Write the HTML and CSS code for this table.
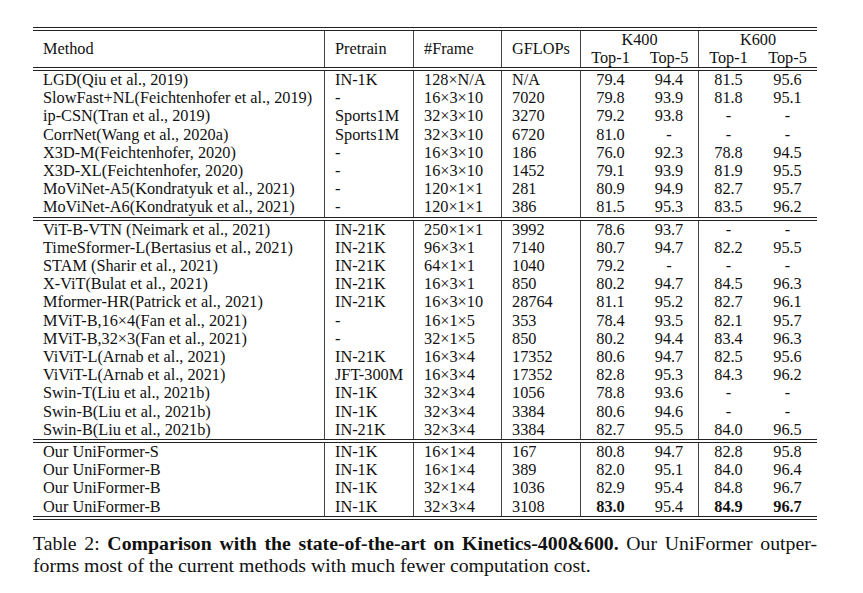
FILE: index.html
```html
<!DOCTYPE html>
<html>
<head>
<meta charset="utf-8">
<link rel="stylesheet" href="styles.css">
</head>
<body>
<div class="page">
<table class="results">
<colgroup>
<col class="c-method"><col class="c-pre"><col class="c-frame"><col class="c-gf">
<col class="c-acc"><col class="c-acc"><col class="c-acc"><col class="c-acc">
</colgroup>
<tbody>
<tr class="rule"><td colspan="8"></td></tr>
<tr class="head">
<td rowspan="2" class="l vr">Method</td>
<td rowspan="2" class="l vr">Pretrain</td>
<td rowspan="2" class="l vr">#Frame</td>
<td rowspan="2" class="l vr">GFLOPs</td>
<td colspan="2" class="c vr">K400</td>
<td colspan="2" class="c">K600</td>
</tr>
<tr class="head">
<td class="c">Top-1</td><td class="c vr">Top-5</td><td class="c">Top-1</td><td class="c">Top-5</td>
</tr>
<tr class="rule"><td colspan="8"></td></tr>
<tr><td class="l vr">LGD(Qiu et al., 2019)</td><td class="l vr">IN-1K</td><td class="l vr">128×N/A</td><td class="l vr">N/A</td><td class="c">79.4</td><td class="c vr">94.4</td><td class="c">81.5</td><td class="c">95.6</td></tr>
<tr><td class="l vr">SlowFast+NL(Feichtenhofer et al., 2019)</td><td class="l vr">-</td><td class="l vr">16×3×10</td><td class="l vr">7020</td><td class="c">79.8</td><td class="c vr">93.9</td><td class="c">81.8</td><td class="c">95.1</td></tr>
<tr><td class="l vr">ip-CSN(Tran et al., 2019)</td><td class="l vr">Sports1M</td><td class="l vr">32×3×10</td><td class="l vr">3270</td><td class="c">79.2</td><td class="c vr">93.8</td><td class="c">-</td><td class="c">-</td></tr>
<tr><td class="l vr">CorrNet(Wang et al., 2020a)</td><td class="l vr">Sports1M</td><td class="l vr">32×3×10</td><td class="l vr">6720</td><td class="c">81.0</td><td class="c vr">-</td><td class="c">-</td><td class="c">-</td></tr>
<tr><td class="l vr">X3D-M(Feichtenhofer, 2020)</td><td class="l vr">-</td><td class="l vr">16×3×10</td><td class="l vr">186</td><td class="c">76.0</td><td class="c vr">92.3</td><td class="c">78.8</td><td class="c">94.5</td></tr>
<tr><td class="l vr">X3D-XL(Feichtenhofer, 2020)</td><td class="l vr">-</td><td class="l vr">16×3×10</td><td class="l vr">1452</td><td class="c">79.1</td><td class="c vr">93.9</td><td class="c">81.9</td><td class="c">95.5</td></tr>
<tr><td class="l vr">MoViNet-A5(Kondratyuk et al., 2021)</td><td class="l vr">-</td><td class="l vr">120×1×1</td><td class="l vr">281</td><td class="c">80.9</td><td class="c vr">94.9</td><td class="c">82.7</td><td class="c">95.7</td></tr>
<tr><td class="l vr">MoViNet-A6(Kondratyuk et al., 2021)</td><td class="l vr">-</td><td class="l vr">120×1×1</td><td class="l vr">386</td><td class="c">81.5</td><td class="c vr">95.3</td><td class="c">83.5</td><td class="c">96.2</td></tr>
<tr class="rule"><td colspan="8"></td></tr>
<tr><td class="l vr">ViT-B-VTN (Neimark et al., 2021)</td><td class="l vr">IN-21K</td><td class="l vr">250×1×1</td><td class="l vr">3992</td><td class="c">78.6</td><td class="c vr">93.7</td><td class="c">-</td><td class="c">-</td></tr>
<tr><td class="l vr">TimeSformer-L(Bertasius et al., 2021)</td><td class="l vr">IN-21K</td><td class="l vr">96×3×1</td><td class="l vr">7140</td><td class="c">80.7</td><td class="c vr">94.7</td><td class="c">82.2</td><td class="c">95.5</td></tr>
<tr><td class="l vr">STAM (Sharir et al., 2021)</td><td class="l vr">IN-21K</td><td class="l vr">64×1×1</td><td class="l vr">1040</td><td class="c">79.2</td><td class="c vr">-</td><td class="c">-</td><td class="c">-</td></tr>
<tr><td class="l vr">X-ViT(Bulat et al., 2021)</td><td class="l vr">IN-21K</td><td class="l vr">16×3×1</td><td class="l vr">850</td><td class="c">80.2</td><td class="c vr">94.7</td><td class="c">84.5</td><td class="c">96.3</td></tr>
<tr><td class="l vr">Mformer-HR(Patrick et al., 2021)</td><td class="l vr">IN-21K</td><td class="l vr">16×3×10</td><td class="l vr">28764</td><td class="c">81.1</td><td class="c vr">95.2</td><td class="c">82.7</td><td class="c">96.1</td></tr>
<tr><td class="l vr">MViT-B,16×4(Fan et al., 2021)</td><td class="l vr">-</td><td class="l vr">16×1×5</td><td class="l vr">353</td><td class="c">78.4</td><td class="c vr">93.5</td><td class="c">82.1</td><td class="c">95.7</td></tr>
<tr><td class="l vr">MViT-B,32×3(Fan et al., 2021)</td><td class="l vr">-</td><td class="l vr">32×1×5</td><td class="l vr">850</td><td class="c">80.2</td><td class="c vr">94.4</td><td class="c">83.4</td><td class="c">96.3</td></tr>
<tr><td class="l vr">ViViT-L(Arnab et al., 2021)</td><td class="l vr">IN-21K</td><td class="l vr">16×3×4</td><td class="l vr">17352</td><td class="c">80.6</td><td class="c vr">94.7</td><td class="c">82.5</td><td class="c">95.6</td></tr>
<tr><td class="l vr">ViViT-L(Arnab et al., 2021)</td><td class="l vr">JFT-300M</td><td class="l vr">16×3×4</td><td class="l vr">17352</td><td class="c">82.8</td><td class="c vr">95.3</td><td class="c">84.3</td><td class="c">96.2</td></tr>
<tr><td class="l vr">Swin-T(Liu et al., 2021b)</td><td class="l vr">IN-1K</td><td class="l vr">32×3×4</td><td class="l vr">1056</td><td class="c">78.8</td><td class="c vr">93.6</td><td class="c">-</td><td class="c">-</td></tr>
<tr><td class="l vr">Swin-B(Liu et al., 2021b)</td><td class="l vr">IN-1K</td><td class="l vr">32×3×4</td><td class="l vr">3384</td><td class="c">80.6</td><td class="c vr">94.6</td><td class="c">-</td><td class="c">-</td></tr>
<tr><td class="l vr">Swin-B(Liu et al., 2021b)</td><td class="l vr">IN-21K</td><td class="l vr">32×3×4</td><td class="l vr">3384</td><td class="c">82.7</td><td class="c vr">95.5</td><td class="c">84.0</td><td class="c">96.5</td></tr>
<tr class="rule"><td colspan="8"></td></tr>
<tr><td class="l vr">Our UniFormer-S</td><td class="l vr">IN-1K</td><td class="l vr">16×1×4</td><td class="l vr">167</td><td class="c">80.8</td><td class="c vr">94.7</td><td class="c">82.8</td><td class="c">95.8</td></tr>
<tr><td class="l vr">Our UniFormer-B</td><td class="l vr">IN-1K</td><td class="l vr">16×1×4</td><td class="l vr">389</td><td class="c">82.0</td><td class="c vr">95.1</td><td class="c">84.0</td><td class="c">96.4</td></tr>
<tr><td class="l vr">Our UniFormer-B</td><td class="l vr">IN-1K</td><td class="l vr">32×1×4</td><td class="l vr">1036</td><td class="c">82.9</td><td class="c vr">95.4</td><td class="c">84.8</td><td class="c">96.7</td></tr>
<tr><td class="l vr">Our UniFormer-B</td><td class="l vr">IN-1K</td><td class="l vr">32×3×4</td><td class="l vr">3108</td><td class="c b">83.0</td><td class="c vr">95.4</td><td class="c b">84.9</td><td class="c b">96.7</td></tr>
<tr class="rule"><td colspan="8"></td></tr>
</tbody>
</table>
<div class="caption">
<div class="cap-line justify">Table 2: <b>Comparison with the state-of-the-art on Kinetics-400&amp;600.</b> Our UniFormer outper-</div>
<div class="cap-line">forms most of the current methods with much fewer computation cost.</div>
</div>
</div>
</body>
</html>
```

FILE: styles.css
```css
html, body {
  margin: 0;
  padding: 0;
  background: #ffffff;
}

.page {
  padding: 27px 0 0 33px;
  width: 784px;
  font-family: "Liberation Serif", "Times New Roman", serif;
  color: #111;
}

.results {
  border-collapse: separate;
  border-spacing: 0;
  table-layout: fixed;
  width: 784px;
  font-size: 16.3px;
}

.c-method { width: 292px; }
.c-pre { width: 89px; }
.c-frame { width: 88px; }
.c-gf { width: 79px; }
.c-acc { width: 59px; }

.results td {
  box-sizing: border-box;
  padding: 0;
  height: 18.2px;
  line-height: 18.2px;
  white-space: nowrap;
  vertical-align: middle;
}

.results td.l { padding-left: 10px; text-align: left; }
.results td.c { text-align: center; }
.results td.vr { border-right: 1px solid #444; }
.results td.b { font-weight: bold; }

.results tr.head td { height: 18px; line-height: 18px; }

.results tr.rule td {
  height: 4px;
  line-height: 0;
  font-size: 0;
  border-top: 1px solid #222;
  border-bottom: 1px solid #222;
}

.caption {
  margin-top: 12px;
  width: 784px;
  font-size: 19.8px;
  line-height: 22px;
  color: #111;
}

.cap-line { white-space: nowrap; }

.cap-line.justify {
  white-space: normal;
  text-align: justify;
  text-align-last: justify;
}
```
